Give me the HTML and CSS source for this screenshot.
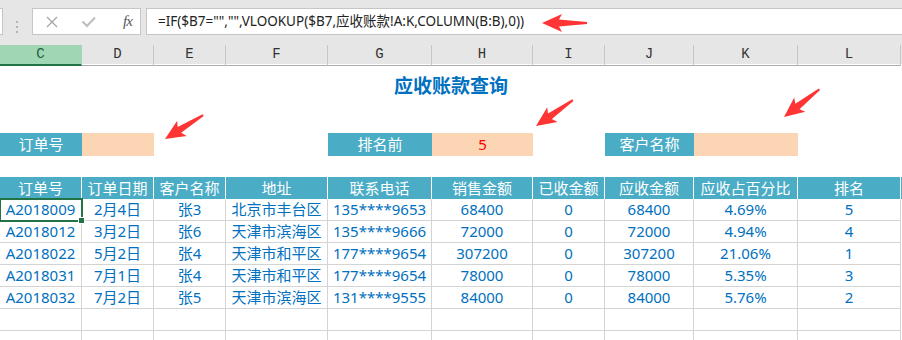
FILE: index.html
```html
<!DOCTYPE html>
<html lang="zh-CN">
<head>
  <meta charset="UTF-8">
  <title>应收账款查询</title>
  <link rel="stylesheet" href="styles.css">
</head>
<body>
  <div class="formula-bar">
    <div class="name-box"></div>
    <div class="grip">
      <svg width="4" height="12" viewBox="0 0 4 12"><rect x="1" y="0" width="2" height="2" fill="#b4b4b4"/><rect x="1" y="5" width="2" height="2" fill="#b4b4b4"/><rect x="1" y="10" width="2" height="2" fill="#b4b4b4"/></svg>
    </div>
    <div class="fx-box">
      <svg class="fx-icon" width="14" height="14" viewBox="0 0 14 14"><path d="M2 2 L12 12 M12 2 L2 12" stroke="#a6a6a6" stroke-width="1.3" fill="none"/></svg>
      <svg class="fx-icon" width="16" height="14" viewBox="0 0 16 14"><path d="M1.5 6.5 L6 11 L14 2.5" stroke="#bdbdbd" stroke-width="2" fill="none"/></svg>
      <span class="fx-text">fx</span>
    </div>
    <div class="formula">=IF($B7="","",VLOOKUP($B7,应收账款!A:K,COLUMN(B:B),0))</div>
  </div>

  <div class="col-heads grid">
    <div class="col-head active">C</div>
    <div class="col-head">D</div>
    <div class="col-head">E</div>
    <div class="col-head">F</div>
    <div class="col-head">G</div>
    <div class="col-head">H</div>
    <div class="col-head">I</div>
    <div class="col-head">J</div>
    <div class="col-head">K</div>
    <div class="col-head">L</div>
  </div>

  <div class="sheet">
    <div class="title">应收账款查询</div>

    <div class="query grid">
      <div class="q-label">订单号</div>
      <div class="q-input"></div>
      <div></div>
      <div></div>
      <div class="q-label">排名前</div>
      <div class="q-input red">5</div>
      <div></div>
      <div class="q-label">客户名称</div>
      <div class="q-input"></div>
      <div></div>
    </div>

    <div class="table">
      <div class="thead grid">
        <div>订单号</div><div>订单日期</div><div>客户名称</div><div>地址</div><div>联系电话</div>
        <div>销售金额</div><div>已收金额</div><div>应收金额</div><div>应收占百分比</div><div>排名</div>
      </div>
      <div class="trow grid">
        <div class="selected">A2018009</div><div>2月4日</div><div>张3</div><div>北京市丰台区</div><div>135****9653</div>
        <div>68400</div><div>0</div><div>68400</div><div>4.69%</div><div>5</div>
      </div>
      <div class="trow grid">
        <div>A2018012</div><div>3月2日</div><div>张6</div><div>天津市滨海区</div><div>135****9666</div>
        <div>72000</div><div>0</div><div>72000</div><div>4.94%</div><div>4</div>
      </div>
      <div class="trow grid">
        <div>A2018022</div><div>5月2日</div><div>张4</div><div>天津市和平区</div><div>177****9654</div>
        <div>307200</div><div>0</div><div>307200</div><div>21.06%</div><div>1</div>
      </div>
      <div class="trow grid">
        <div>A2018031</div><div>7月1日</div><div>张4</div><div>天津市和平区</div><div>177****9654</div>
        <div>78000</div><div>0</div><div>78000</div><div>5.35%</div><div>3</div>
      </div>
      <div class="trow grid">
        <div>A2018032</div><div>7月2日</div><div>张5</div><div>天津市滨海区</div><div>131****9555</div>
        <div>84000</div><div>0</div><div>84000</div><div>5.76%</div><div>2</div>
      </div>
      <div class="trow grid">
        <div></div><div></div><div></div><div></div><div></div><div></div><div></div><div></div><div></div><div></div>
      </div>
      <div class="trow grid">
        <div></div><div></div><div></div><div></div><div></div><div></div><div></div><div></div><div></div><div></div>
      </div>
    </div>
  </div>

  <!-- red annotation arrows drawn over the sheet -->
  <svg class="arrows" width="902" height="340" viewBox="0 0 902 340">
    <defs>
      <polygon id="arrow" points="0,0 20,-9 17,-3.4 45,-1 45,1 17,3.4 20,9" fill="#ff3535"/>
    </defs>
    <use href="#arrow" transform="translate(542 23)"/>
    <use href="#arrow" transform="translate(165 139) rotate(-32)"/>
    <use href="#arrow" transform="translate(536 126) rotate(-35)"/>
    <use href="#arrow" transform="translate(784 117) rotate(-38)"/>
  </svg>
</body>
</html>
```

FILE: styles.css
```css
body {
  margin: 0;
  width: 902px;
  height: 340px;
  overflow: hidden;
  position: relative;
  background: #fff;
  font-family: "Noto Sans", "Noto Sans CJK SC", sans-serif;
}
.grid {
  display: grid;
  grid-template-columns: 82px 72px 72px 102px 104px 101px 72px 89px 104px 103px;
}
.formula-bar {
  display: flex;
  height: 45px;
  padding-top: 8px;
  box-sizing: border-box;
  background: #e6e6e6;
}
.name-box {
  width: 3px;
  height: 27px;
  box-sizing: border-box;
  background: #fff;
  border: 1px solid #c6c6c6;
  border-left: none;
}
.grip {
  width: 29px;
  display: flex;
  align-items: center;
  justify-content: center;
  padding-right: 2px;
  box-sizing: border-box;
}
.fx-box {
  width: 109px;
  height: 27px;
  box-sizing: border-box;
  background: #fff;
  border: 1px solid #c6c6c6;
  display: flex;
  align-items: center;
  padding-left: 12px;
}
.fx-icon {
  margin-right: 22px;
}
.fx-text {
  font-family: "Liberation Serif", serif;
  font-style: italic;
  font-size: 15px;
  color: #555;
  margin-left: 4px;
  letter-spacing: -1px;
}
.formula {
  flex: 1;
  margin-left: 5px;
  height: 27px;
  box-sizing: border-box;
  background: #fff;
  border: 1px solid #c6c6c6;
  border-right: none;
  padding-left: 11px;
  font-size: 13.5px;
  line-height: 25px;
  color: #222;
  white-space: nowrap;
}
.col-heads {
  height: 19px;
  background: #e6e6e6;
}
.col-head {
  box-sizing: border-box;
  border-bottom: 1px solid #ababab;
  border-right: 1px solid #c6c6c6;
  font-family: "Liberation Mono", monospace;
  font-size: 14px;
  line-height: 19px;
  text-align: center;
  color: #333;
}
.col-head.active {
  background: #a0d6b4;
  border-bottom: 2px solid #217346;
  border-right-color: #a0d6b4;
  color: #1f5f3c;
}
.title {
  height: 44px;
  line-height: 44px;
  text-align: center;
  font-size: 19px;
  font-weight: bold;
  color: #0070c0;
}
.query {
  margin-top: 25px;
  height: 23px;
  font-size: 15px;
  line-height: 23px;
  text-align: center;
}
.q-label {
  background: #4bacc6;
  color: #fff;
}
.q-input {
  background: #fcd5b4;
}
.red {
  color: #ff0000;
}
.table {
  margin-top: 21px;
}
.thead {
  height: 22px;
  background: #4bacc6;
  color: #fff;
  font-size: 15px;
  line-height: 22px;
  text-align: center;
}
.thead div {
  border-right: 1px solid #fff;
}
.trow {
  height: 22px;
  font-size: 15px;
  line-height: 21px;
  text-align: center;
  color: #0070c0;
}
.trow div {
  box-sizing: border-box;
  border-right: 1px solid #d4d4d4;
  border-bottom: 1px solid #d4d4d4;
  white-space: nowrap;
}
.trow .selected {
  position: relative;
  outline: 2px solid #217346;
  outline-offset: -1px;
  z-index: 1;
}
.trow .selected::after {
  content: "";
  position: absolute;
  right: -4px;
  bottom: -4px;
  width: 5px;
  height: 5px;
  background: #217346;
  border: 1px solid #fff;
}
.arrows {
  position: absolute;
  left: 0;
  top: 0;
  pointer-events: none;
}
```
